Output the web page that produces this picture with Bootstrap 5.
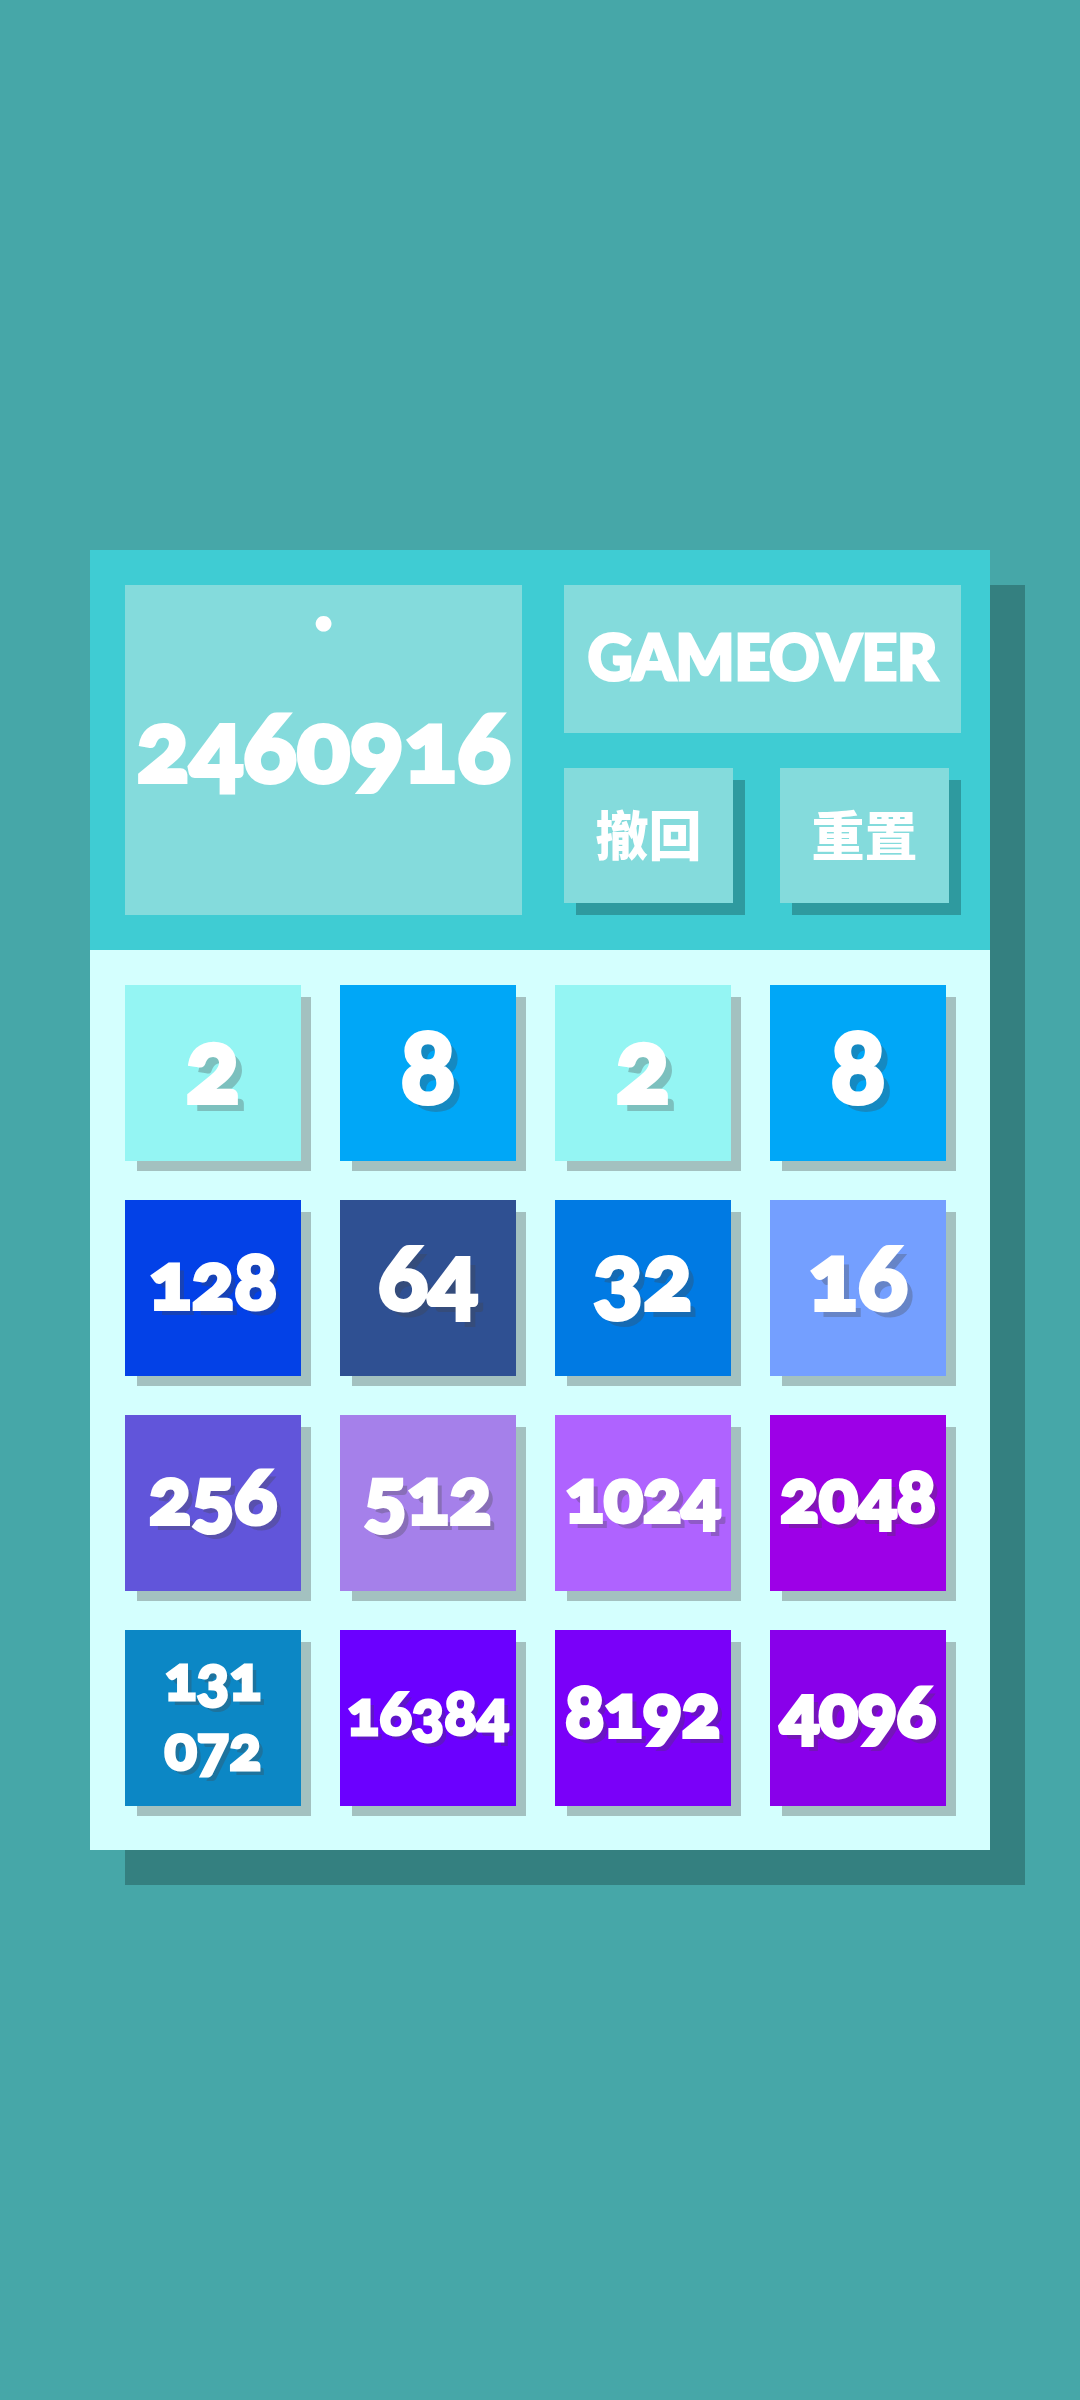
<!DOCTYPE html>
<html lang="zh-CN">
<head>
<meta charset="utf-8">
<meta name="viewport" content="width=device-width, initial-scale=1">
<title>2048</title>
<link href="https://cdn.jsdelivr.net/npm/bootstrap@5.3.0/dist/css/bootstrap.min.css" rel="stylesheet">
<style>
  body {
    background: #46a7a8;
    color: #fff;
    font-family: Lato, "Noto Sans CJK SC", sans-serif;
    font-weight: 900;
    font-variant-numeric: oldstyle-nums;
  }
  .game { background: #d4fffe; box-shadow: 35px 35px 0 #348080; }
  .game-head {
    display: grid;
    grid-template-columns: 1fr 1fr;
    gap: 42px;
    padding: 35px 29px 35px 35px;
    background: #3fccd3;
  }
  .panel { background: #84dbdc; }
  .score-panel { min-height: 330px; -webkit-text-stroke: 4px #fff; }
  .score-label { font-size: 72px; line-height: 32px; }
  .score-value { font-size: 99px; line-height: 110px; margin-top: 72px; }
  .side { gap: 35px; }
  .status { font-size: 62px; line-height: 80px; min-height: 148px; padding-bottom: 6px; -webkit-text-stroke: 3px #fff; }
  .actions { display: grid; grid-template-columns: 1fr 1fr; gap: 47px; padding: 0 12px 12px 0; }
  .action {
    height: 135px;
    border: 0;
    padding: 0;
    color: #fff;
    font-size: 53px;
    line-height: 64px;
    font-weight: 900;
    box-shadow: 12px 12px 0 #2e9a9f;
  }
  .board {
    display: grid;
    grid-template-columns: repeat(4, 1fr);
    gap: 39px;
    padding: 35px 44px 44px 35px;
  }
  .tile {
    aspect-ratio: 1;
    min-width: 0;
    padding-bottom: 18px;
    line-height: 70px;
    -webkit-text-stroke: 4px #fff;
    text-shadow: 6px 6px 0 rgba(70, 70, 70, .3);
    box-shadow: 11px 11px 0 -1px #a3c1c0;
  }
  .digits-1 { font-size: 102px; text-shadow: 8px 8px 0 rgba(70, 70, 70, .3); }
  .digits-2 { font-size: 92px; padding-bottom: 26px; text-shadow: 7px 7px 0 rgba(70, 70, 70, .3); }
  .digits-3 { font-size: 79px; }
  .digits-4 { font-size: 72px; }
  .digits-5 { font-size: 60px; padding-bottom: 12px; -webkit-text-stroke-width: 3px; text-shadow: 5px 5px 0 rgba(70, 70, 70, .3); }
  .n2 { background: #94f5f3; }
  .n8 { background: #00a7f7; }
  .n16 { background: #749fff; }
  .n32 { background: #007ae3; }
  .n64 { background: #2f5092; }
  .n128 { background: #0341e7; }
  .n256 { background: #6155da; }
  .n512 { background: #a580ea; }
  .n1024 { background: #af63ff; }
  .n2048 { background: #9d00e7; }
  .n4096 { background: #8900ea; }
  .n8192 { background: #7a00f9; }
  .n16384 { background: #6b00ff; }
  .n131072 { background: #0c87c5; }
</style>
</head>
<body>
<div class="container-fluid p-0">
  <div class="row g-0 min-vh-100 align-items-center justify-content-center">
    <main class="col-10 game">
      <header class="game-head">
        <section class="panel score-panel text-center">
          <div class="score-label">.</div>
          <div class="score-value">2460916</div>
        </section>
        <section class="side d-flex flex-column">
          <div class="panel status d-flex align-items-center justify-content-center">GAMEOVER</div>
          <div class="actions">
            <button type="button" class="panel action">撤回</button>
            <button type="button" class="panel action">重置</button>
          </div>
        </section>
      </header>
      <section class="board text-center">
        <div class="tile n2 digits-1 d-flex align-items-center justify-content-center">2</div>
        <div class="tile n8 digits-1 d-flex align-items-center justify-content-center">8</div>
        <div class="tile n2 digits-1 d-flex align-items-center justify-content-center">2</div>
        <div class="tile n8 digits-1 d-flex align-items-center justify-content-center">8</div>
        <div class="tile n128 digits-3 d-flex align-items-center justify-content-center">128</div>
        <div class="tile n64 digits-2 d-flex align-items-center justify-content-center">64</div>
        <div class="tile n32 digits-2 d-flex align-items-center justify-content-center">32</div>
        <div class="tile n16 digits-2 d-flex align-items-center justify-content-center">16</div>
        <div class="tile n256 digits-3 d-flex align-items-center justify-content-center">256</div>
        <div class="tile n512 digits-3 d-flex align-items-center justify-content-center">512</div>
        <div class="tile n1024 digits-4 d-flex align-items-center justify-content-center">1024</div>
        <div class="tile n2048 digits-4 d-flex align-items-center justify-content-center">2048</div>
        <div class="tile n131072 digits-5 d-flex align-items-center justify-content-center">131<br>072</div>
        <div class="tile n16384 digits-5 d-flex align-items-center justify-content-center">16384</div>
        <div class="tile n8192 digits-4 d-flex align-items-center justify-content-center">8192</div>
        <div class="tile n4096 digits-4 d-flex align-items-center justify-content-center">4096</div>
      </section>
    </main>
  </div>
</div>
<script src="https://cdn.jsdelivr.net/npm/bootstrap@5.3.0/dist/js/bootstrap.bundle.min.js"></script>
</body>
</html>
